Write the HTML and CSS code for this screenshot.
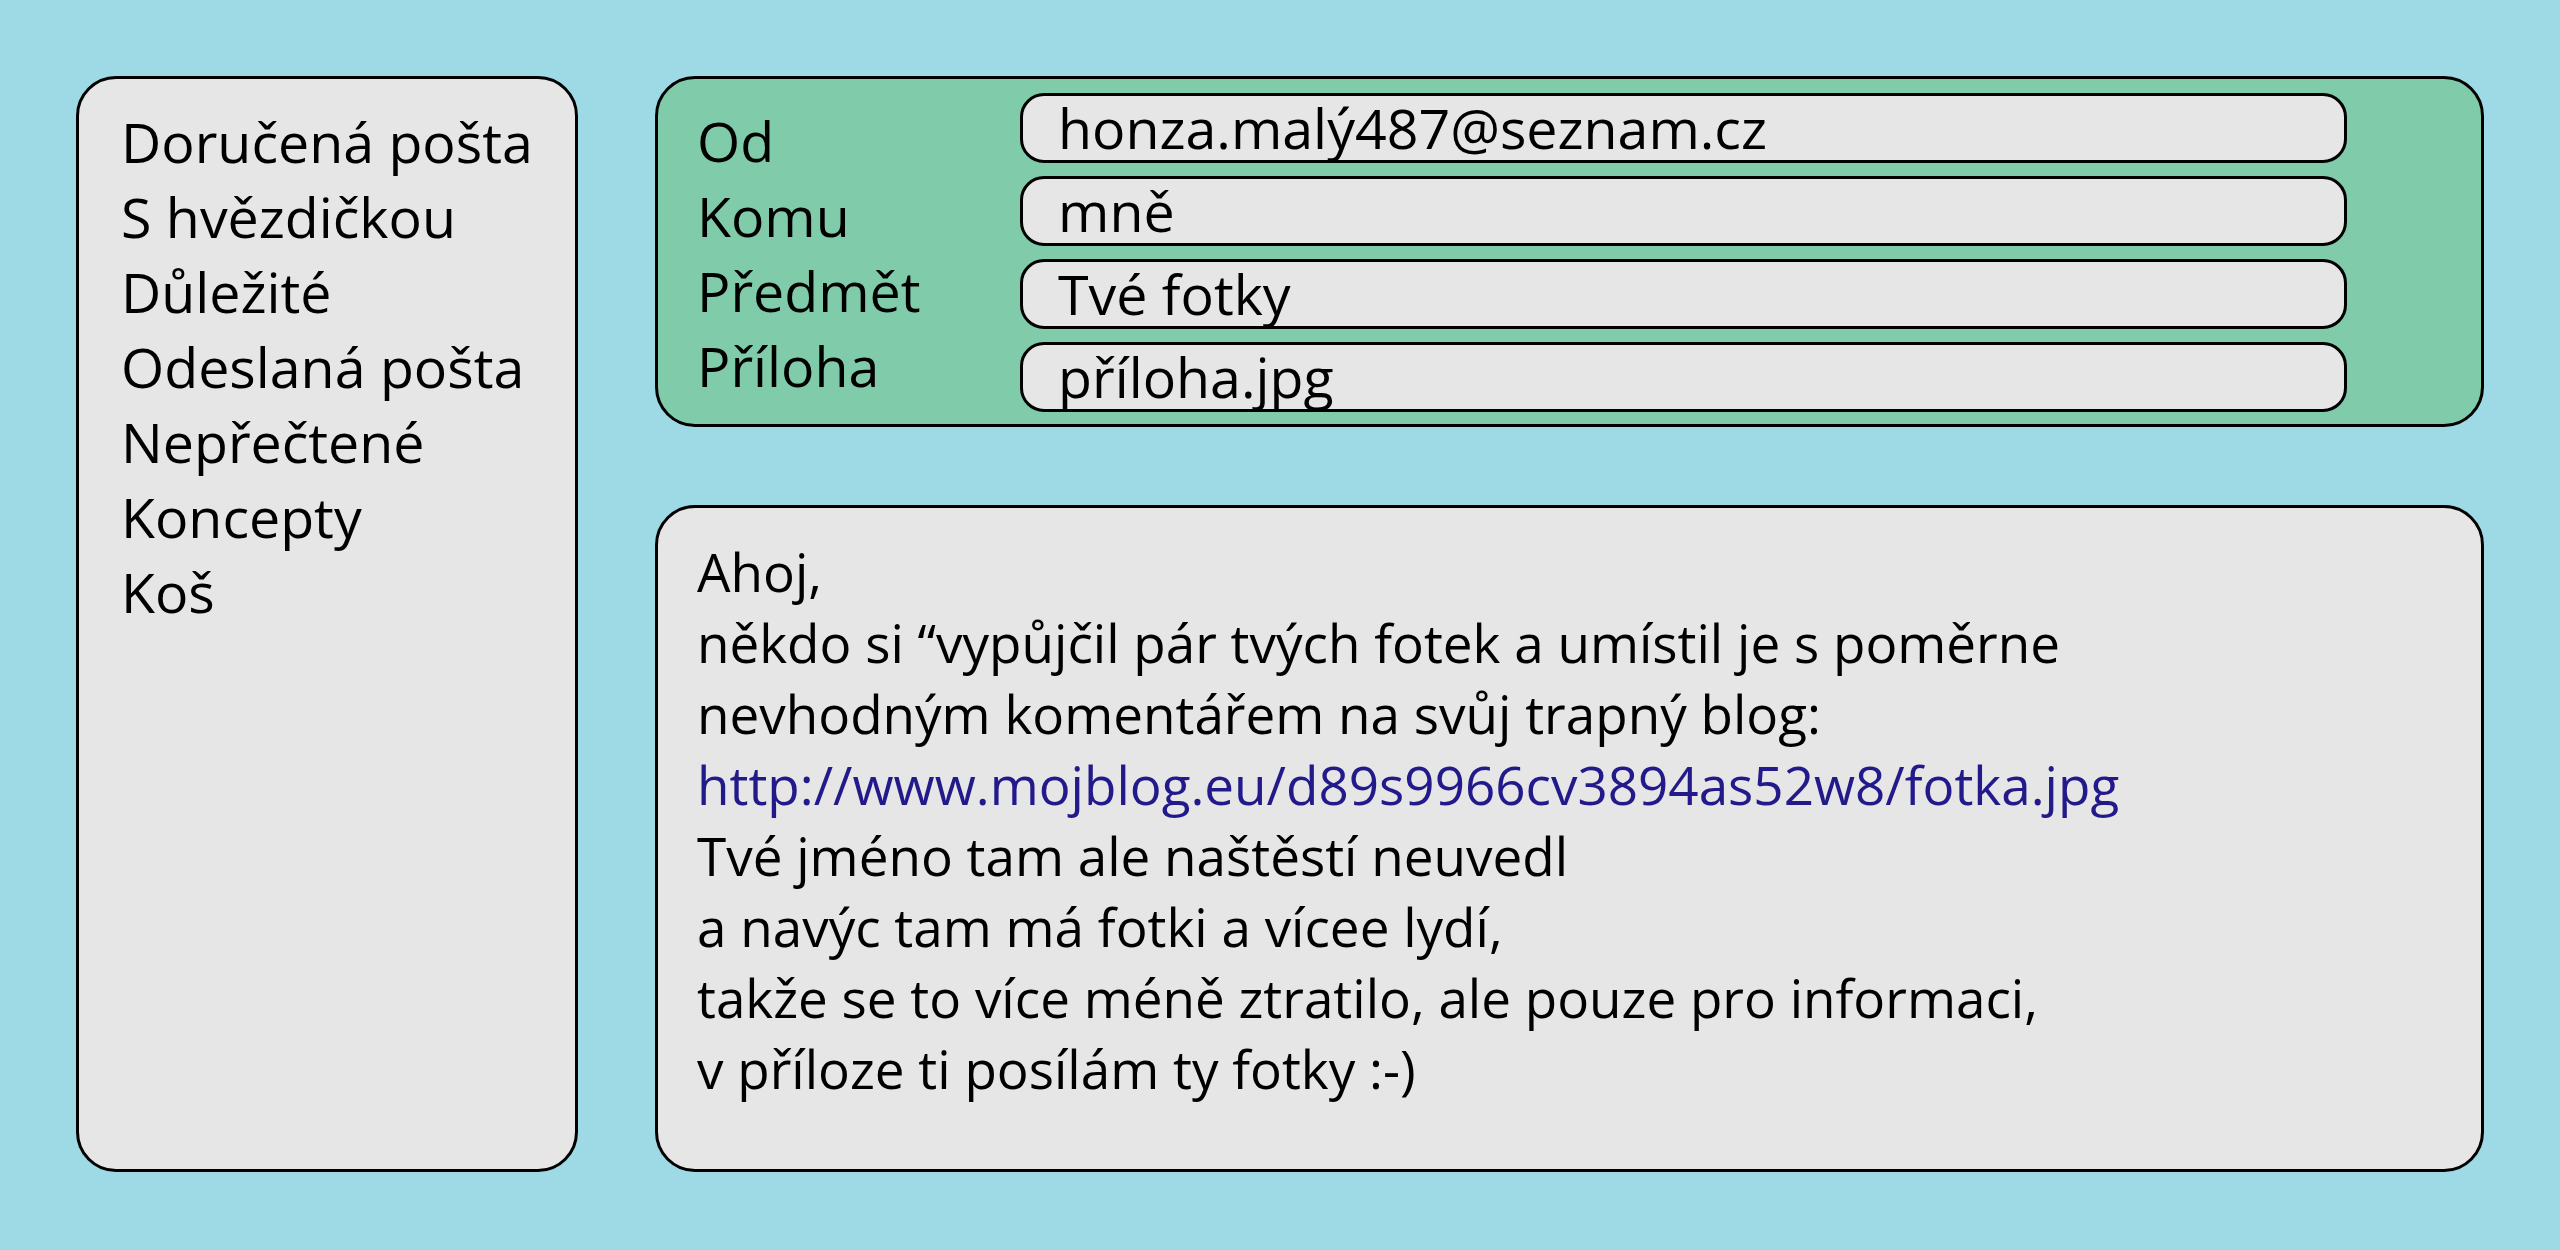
FILE: index.html
```html
<!DOCTYPE html>
<html lang="cs">
<head>
<meta charset="utf-8">
<title>Pošta</title>
<link rel="stylesheet" href="styles.css">
</head>
<body>
<div class="app">
  <nav class="sidebar">
    <div class="folder">Doručená pošta</div>
    <div class="folder">S hvězdičkou</div>
    <div class="folder">Důležité</div>
    <div class="folder">Odeslaná pošta</div>
    <div class="folder">Nepřečtené</div>
    <div class="folder">Koncepty</div>
    <div class="folder">Koš</div>
  </nav>
  <main class="main">
    <section class="header">
      <div class="labels">
        <div class="label">Od</div>
        <div class="label">Komu</div>
        <div class="label">Předmět</div>
        <div class="label">Příloha</div>
      </div>
      <div class="fields">
        <div class="field">honza.malý487@seznam.cz</div>
        <div class="field">mně</div>
        <div class="field">Tvé fotky</div>
        <div class="field">příloha.jpg</div>
      </div>
    </section>
    <section class="message">
      <div class="line">Ahoj,</div>
      <div class="line">někdo si “vypůjčil pár tvých fotek a umístil je s poměrne</div>
      <div class="line">nevhodným komentářem na svůj trapný blog:</div>
      <div class="line link">http://www.mojblog.eu/d89s9966cv3894as52w8/fotka.jpg</div>
      <div class="line">Tvé jméno tam ale naštěstí neuvedl</div>
      <div class="line">a navýc tam má fotki a vícee lydí,</div>
      <div class="line">takže se to více méně ztratilo, ale pouze pro informaci,</div>
      <div class="line">v příloze ti posílám ty fotky :-)</div>
    </section>
  </main>
</div>
</body>
</html>
```
FILE: styles.css
```css
* { box-sizing: border-box; }

html, body {
  margin: 0;
  padding: 0;
  background: #9ed9e6;
}

body {
  font-family: "Open Sans", "Noto Sans", sans-serif;
  color: #000;
  width: 2560px;
  height: 1250px;
}

.app {
  display: flex;
  gap: 77px;
  padding: 76px 76px 78px 76px;
  height: 1250px;
}

.sidebar {
  width: 502px;
  flex: none;
  background: #e6e6e6;
  border: 3px solid #000;
  border-radius: 40px;
  padding: 25px 0 0 42px;
  font-size: 55.5px;
  line-height: 75px;
}

.main {
  flex: 1;
  display: flex;
  flex-direction: column;
  gap: 78px;
}

.header {
  display: flex;
  align-items: flex-start;
  background: #7fcbaa;
  border: 3px solid #000;
  border-radius: 40px;
  padding: 14px 134px 12px 39px;
}

.labels {
  width: 323px;
  flex: none;
  margin-top: 10px;
  font-size: 55.5px;
  line-height: 75px;
}

.fields {
  flex: 1;
  display: flex;
  flex-direction: column;
  gap: 13px;
}

.field {
  height: 70px;
  background: #e6e6e6;
  border: 3px solid #000;
  border-radius: 24px;
  padding-left: 35px;
  display: flex;
  align-items: center;
  font-size: 55.5px;
  line-height: 1;
}

.message {
  flex: 1;
  background: #e6e6e6;
  border: 3px solid #000;
  border-radius: 40px;
  padding: 28px 0 0 39px;
  font-size: 53px;
  line-height: 71px;
}

.link {
  color: #22198a;
}
```
